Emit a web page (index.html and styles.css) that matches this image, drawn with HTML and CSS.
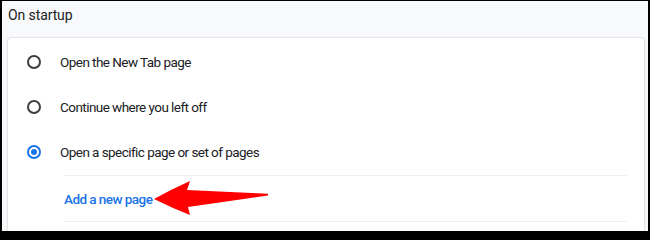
FILE: index.html
```html
<!DOCTYPE html>
<html lang="en">
<head>
<meta charset="utf-8">
<title>On startup</title>
<link rel="stylesheet" href="styles.css">
</head>
<body>
<div class="frame">
  <h2 class="section-title">On startup</h2>
  <div class="card">
    <div class="radio-row">
      <svg class="radio" viewBox="0 0 14 14" width="14" height="14"><circle cx="7" cy="7" r="6" fill="none" stroke="#3c4043" stroke-width="2"/></svg>
      <span class="label">Open the New Tab page</span>
    </div>
    <div class="radio-row">
      <svg class="radio" viewBox="0 0 14 14" width="14" height="14"><circle cx="7" cy="7" r="6" fill="none" stroke="#3c4043" stroke-width="2"/></svg>
      <span class="label">Continue where you left off</span>
    </div>
    <div class="radio-row tall">
      <svg class="radio" viewBox="0 0 14 14" width="14" height="14"><circle cx="7" cy="7" r="6" fill="none" stroke="#1a73e8" stroke-width="2"/><circle cx="7" cy="7" r="3" fill="#1a73e8"/></svg>
      <span class="label">Open a specific page or set of pages</span>
    </div>
    <div class="sub-list">
      <div class="sub-row">
        <a class="link" href="#">Add a new page</a>
      </div>
    </div>
  </div>
  <svg class="arrow" viewBox="0 0 122 40" width="122" height="40">
    <path d="M4 21 Q22 11 40 3 L37 12 L118 15.8 L118 17.4 L38 29 L40 37 Q22 30 4 21 Z" fill="#ff0000"/>
  </svg>
</div>
</body>
</html>
```

FILE: styles.css
```css
* { box-sizing: border-box; }
html, body {
  margin: 0;
  padding: 0;
  background: #000;
}
.frame {
  position: relative;
  width: 650px;
  height: 233px;
  overflow: hidden;
  background: #f8f9fa;
  border-style: solid;
  border-color: #000;
  border-width: 1px 2px 2px 2px;
  font-family: Roboto, "Liberation Sans", Arial, sans-serif;
  color: #202124;
}
.section-title {
  margin: 0;
  padding: 4px 0 0 6px;
  height: 36px;
  font-size: 14px;
  font-weight: 400;
  line-height: 20px;
  letter-spacing: -0.1px;
}
.card {
  margin-left: 5px;
  width: 638px;
  height: 220px;
  background: #fff;
  border: 1px solid #e3e5e8;
  border-radius: 4px;
  box-shadow: 0 1px 2px rgba(60, 64, 67, 0.12);
  padding-top: 1px;
}
.radio-row {
  display: flex;
  align-items: center;
  height: 45px;
  padding-left: 19px;
  gap: 19px;
}
.radio-row.tall { height: 46px; }
.radio { display: block; flex: none; }
.label {
  font-size: 13.5px;
  letter-spacing: -0.55px;
  line-height: 20px;
}
.sub-list {
  margin: 0 17px 0 56px;
}
.sub-row {
  display: flex;
  align-items: center;
  height: 47px;
  border-top: 1px solid #eef0f1;
  border-bottom: 1px solid #eef0f1;
}
.link {
  color: #1a73e8;
  font-size: 13.5px;
  font-weight: 500;
  letter-spacing: -0.55px;
  text-decoration: none;
}
.arrow {
  position: absolute;
  left: 148px;
  top: 177px;
}
```
